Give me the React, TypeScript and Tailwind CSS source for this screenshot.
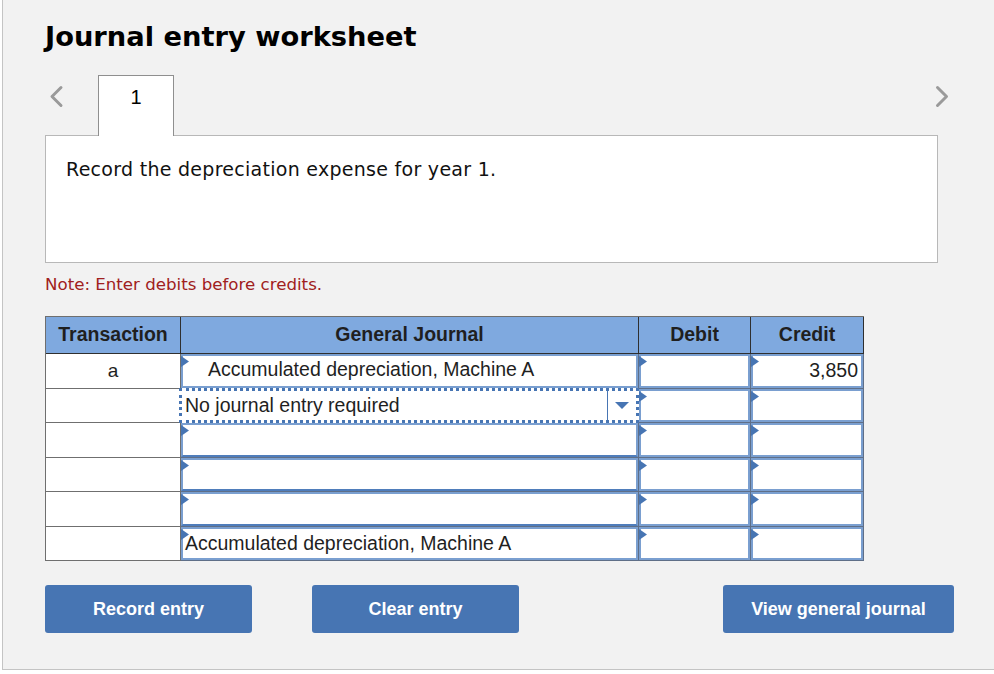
const rows = [
    { tx: 'a', account: 'Accumulated depreciation, Machine A', indent: true, credit: '3,850', h: 'h-[35px]' },
    { tx: '', account: 'No journal entry required', focused: true, h: 'h-[34px]' },
    { tx: '', account: '', h: 'h-[35px]' },
    { tx: '', account: '', h: 'h-[34px]' },
    { tx: '', account: '', h: 'h-[35px]' },
    { tx: '', account: 'Accumulated depreciation, Machine A', flush: true, h: 'h-[34px]' },
]

function Flag() {
    return (
        <svg className="absolute left-0 top-[2px] z-10" width="8" height="11" viewBox="0 0 8 11">
            <path d="M0 0 L8 5.5 L0 11 Z" fill="#4775b3" />
        </svg>
    )
}

function Chevron({ right }: { right?: boolean }) {
    return (
        <svg width="18" height="26" viewBox="0 0 18 26">
            <path
                d={right ? 'M4.5 4.5 L13.5 13.5 L4.5 22.5' : 'M12 4.5 L3 13.5 L12 22.5'}
                fill="none"
                stroke="#9a9a9a"
                strokeWidth="3"
                strokeLinecap="round"
                strokeLinejoin="round"
            />
        </svg>
    )
}

function AmountCell({ value, h }: { value?: string; h: string }) {
    return (
        <div className={`relative border-b border-r border-[#5f6f88] ${h}`}>
            <Flag />
            <div className="flex h-full items-center justify-end border-2 border-[#7a9fd0] bg-white pr-[3px] text-[19.5px] text-[#1f1f1f]">
                {value}
            </div>
        </div>
    )
}

function Button({ label, width }: { label: string; width: string }) {
    return (
        <button className={`h-[48px] rounded-[3px] bg-[#4775b3] text-[18px] font-bold text-white ${width}`}>
            {label}
        </button>
    )
}

export default function App() {
    return (
        <div className="h-[674px] w-full overflow-hidden bg-white font-['Liberation_Sans',sans-serif]">
            <div className="ml-[2px] h-[670px] border-b border-l border-[#c4c4c4] bg-[#f2f2f2] pl-[42px] pr-[40px] pt-[19px]">
                <h1 className="h-[56px] font-['DejaVu_Sans',sans-serif] text-[27.3px] font-bold leading-[36px] text-black">
                    Journal entry worksheet
                </h1>

                {/* Tab strip */}
                <div className="flex h-[61px] w-[893px] items-start">
                    <div className="ml-[4px] mt-[8px] w-[49px]">
                        <Chevron />
                    </div>
                    <div className="relative z-10 h-[61px] w-[76px] border border-b-0 border-[#8f8f8f] bg-white pt-[8px] text-center text-[20px] leading-[26px] text-black">
                        1
                    </div>
                    <div className="ml-auto mr-[-13px] mt-[8px]">
                        <Chevron right />
                    </div>
                </div>

                <div className="mt-[-1px] h-[128px] w-[893px] border border-[#b8b8b8] bg-white pl-[20px] pt-[19px] font-['DejaVu_Sans',sans-serif] text-[19px] leading-[28px] tracking-[0.28px] text-[#111]">
                    Record the depreciation expense for year 1.
                </div>

                <p className="mt-[11px] font-['DejaVu_Sans',sans-serif] text-[16.65px] leading-[22px] text-[#a02020]">
                    Note: Enter debits before credits.
                </p>

                <div className="mt-[20px] grid w-[819px] grid-cols-[135px_458px_112px_113px] border-l border-t border-[#6f6f6f]">
                    {/* Header */}
                    <div className="flex h-[37px] items-center justify-center border-b border-r border-[#2f2f2f] bg-[#7fa9df] text-[19.5px] font-bold text-[#1f1f1f]">
                        Transaction
                    </div>
                    <div className="flex h-[37px] items-center justify-center border-b border-r border-[#2f2f2f] bg-[#7fa9df] text-[19.5px] font-bold text-[#1f1f1f]">
                        General Journal
                    </div>
                    <div className="flex h-[37px] items-center justify-center border-b border-r border-[#2f2f2f] bg-[#7fa9df] text-[19.5px] font-bold text-[#1f1f1f]">
                        Debit
                    </div>
                    <div className="flex h-[37px] items-center justify-center border-b border-r border-[#2f2f2f] bg-[#7fa9df] text-[19.5px] font-bold text-[#1f1f1f]">
                        Credit
                    </div>

                    {rows.map((row, i) => (
                        <div key={i} className="contents">
                            <div className={`flex items-center justify-center border-b border-r border-[#6f6f6f] bg-white text-[19px] text-[#1f1f1f] ${row.h}`}>
                                {row.tx}
                            </div>
                            <div className={`relative border-b border-r border-[#5f6f88] ${row.h}`}>
                                {row.focused ? (
                                    <div className="absolute bottom-[-1px] left-[-2px] right-[-1px] top-[-1px] z-20 flex items-center border-[3px] border-dotted border-[#4775b3] bg-white pl-[3px] text-[19.5px] text-[#1f1f1f]">
                                        <span className="flex-1">{row.account}</span>
                                        <span className="flex h-full w-[29px] items-center justify-center border-l border-[#4775b3]">
                                            <svg width="14" height="7" viewBox="0 0 14 7">
                                                <path d="M0 0 H14 L7 7 Z" fill="#4775b3" />
                                            </svg>
                                        </span>
                                    </div>
                                ) : (
                                    <>
                                        <Flag />
                                        <div
                                            className={`flex h-full items-center border-2 bg-white text-[19.5px] text-[#1f1f1f] ${
                                                row.account ? 'border-[#7a9fd0]' : 'border-[#7a9fd0] border-b-[#4f7dbb]'
                                            } ${row.indent ? 'pb-[2px] pl-[25px]' : 'pt-px pl-[2px]'}`}
                                        >
                                            {row.account}
                                        </div>
                                    </>
                                )}
                            </div>
                            <AmountCell h={row.h} />
                            <AmountCell h={row.h} value={row.credit} />
                        </div>
                    ))}
                </div>

                <div className="mt-[24px] flex w-[909px]">
                    <Button label="Record entry" width="w-[207px]" />
                    <Button label="Clear entry" width="ml-[60px] w-[207px]" />
                    <Button label="View general journal" width="ml-auto w-[231px]" />
                </div>
            </div>
        </div>
    )
}
